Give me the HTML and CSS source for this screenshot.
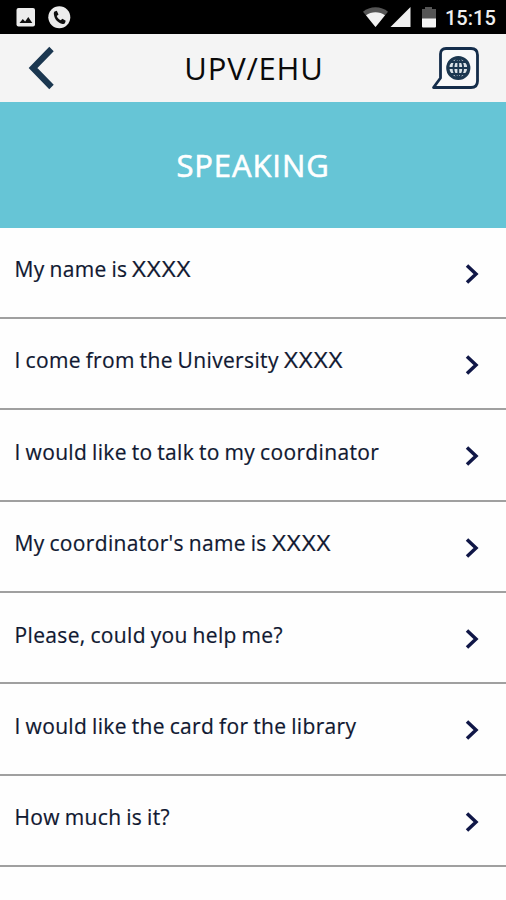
FILE: index.html
```html
<!DOCTYPE html>
<html lang="en">
<head>
<meta charset="utf-8">
<title>UPV/EHU – Speaking</title>
<link rel="stylesheet" href="styles.css">
</head>
<body>
<div class="status">
  <svg class="status-left" width="56" height="34" viewBox="0 0 56 34">
    <rect x="0.5" y="8" width="18.5" height="18.5" rx="2" fill="#ececec"/>
    <path d="M3.5 23l3.3-4 2.3 2.5 3.2-4.5 4 6z" fill="#111"/>
    <circle cx="43.3" cy="17.3" r="11" fill="#ececec"/>
    <path d="M38.6 11.4l2.2-.6 1.7 3.7-1.7 1.5c.7 2 2 3.400 3.900 4.300l1.700-1.600 3.300 2.100-.7 2.300c-.4.800-1.400 1-2.400.8-4.600-.9-8-4.700-8.700-9.500-.2-1.300-.1-2.500.7-3z" fill="#111"/>
  </svg>
  <svg class="status-right" width="76" height="34" viewBox="0 0 76 34">
    <path d="M0 11.800C6.500 5.800 18.500 5.800 25 11.800L12.500 27z" fill="#555"/>
    <path d="M3 15.200C8 11.200 17 11.200 22 15.200L12.500 27z" fill="#f2f2f2"/>
    <path d="M27.500 27L47.500 7V27z" fill="#f0f0f0"/>
    <path d="M59 9h3V7h7v2h4v10H59z" fill="#555"/>
    <path d="M59 18.500h14v8q0 1-1 1H60q-1 0-1-1z" fill="#f4f4f4"/>
  </svg>
  <span class="clock">15:15</span>
</div>
<header class="bar">
  <svg class="back" width="27" height="44" viewBox="0 0 27 44">
    <path d="M23.500 3L5 22l18.500 19" fill="none" stroke="#1b3750" stroke-width="6.200"/>
  </svg>
  <h1 class="title">UPV/EHU</h1>
  <svg class="lang" width="50" height="44" viewBox="0 0 50 44">
    <path d="M10.500 8Q10.500 2.500 16 2.500H41Q47.500 2.500 47.500 9V35Q47.500 41.500 41 41.500H3.500L10.500 32z" fill="#f8f9fa" stroke="#142d4b" stroke-width="2.800" stroke-linejoin="round"/>
    <circle cx="28.300" cy="22" r="10.500" fill="#dbe3e8" stroke="#1b3750" stroke-width="3.200"/>
    <path d="M28.300 11.500v21M17.500 22h21.500M20 16h16.600M20 28h16.600M28.300 11.500c-6.500 6-6.500 15 0 21M28.300 11.500c6.500 6 6.500 15 0 21" fill="none" stroke="#1b3750" stroke-width="1.800"/>
  </svg>
</header>
<section class="banner"><h2 class="heading">SPEAKING</h2></section>
<ul class="list">
  <li class="row"><span class="phrase">My name is <span class="blank">XXXX</span></span><svg class="chev" viewBox="0 0 14 22"><path d="M2 2.500L11 11l-9 8.500"/></svg></li>
  <li class="row"><span class="phrase">I come from the University <span class="blank">XXXX</span></span><svg class="chev" viewBox="0 0 14 22"><path d="M2 2.500L11 11l-9 8.500"/></svg></li>
  <li class="row"><span class="phrase">I would like to talk to my coordinator</span><svg class="chev" viewBox="0 0 14 22"><path d="M2 2.500L11 11l-9 8.500"/></svg></li>
  <li class="row"><span class="phrase">My coordinator's name is <span class="blank">XXXX</span></span><svg class="chev" viewBox="0 0 14 22"><path d="M2 2.500L11 11l-9 8.500"/></svg></li>
  <li class="row"><span class="phrase">Please, could you help me?</span><svg class="chev" viewBox="0 0 14 22"><path d="M2 2.500L11 11l-9 8.500"/></svg></li>
  <li class="row"><span class="phrase">I would like the card for the library</span><svg class="chev" viewBox="0 0 14 22"><path d="M2 2.500L11 11l-9 8.500"/></svg></li>
  <li class="row"><span class="phrase">How much is it?</span><svg class="chev" viewBox="0 0 14 22"><path d="M2 2.500L11 11l-9 8.500"/></svg></li>
</ul>
</body>
</html>
```
FILE: styles.css
```css
* { box-sizing: border-box; }
body { margin: 0; height: 900px; overflow: hidden; background: #fefefe; font-family: "Open Sans", "Noto Sans", sans-serif; }
.status { display: flex; height: 34px; padding: 0 11px 0 16px; background: #000; }
.status-left { margin-right: auto; }
.status-right { margin-right: 6px; }
.clock { width: 50px; color: #eee; font: 500 20px/36px Roboto, sans-serif; white-space: nowrap; }
.bar { display: grid; grid-template-columns: 50px 1fr 50px; align-items: center; height: 68px; padding: 0 26px 0 28px; background: #f4f4f4; }
.title { margin: 0; text-align: center; color: #0a0a0a; font-size: 31px; font-weight: 400; line-height: 68px; letter-spacing: 0.800px; white-space: nowrap; }
.banner { display: flex; justify-content: center; align-items: center; height: 125.500px; background: #66c5d6; }
.heading { margin: 0; color: #fff; font-size: 31px; font-weight: 400; line-height: 40px; letter-spacing: 0.900px; white-space: nowrap; -webkit-text-stroke: 0.600px #fff; }
.list { margin: 0; padding: 0; list-style: none; }
.row { display: flex; justify-content: space-between; height: 91.400px; padding: 26.500px 27px 0 14.500px; border-bottom: 2px solid #a0a0a0; }
.phrase { color: #101831; font-size: 21px; line-height: 30px; letter-spacing: 0.350px; word-spacing: -1px; white-space: nowrap; -webkit-text-stroke: 0.200px #101831; }
.blank { display: inline-block; letter-spacing: 0.800px; transform: scaleX(1.150); transform-origin: left; }
.chev { width: 14px; height: 22px; margin-top: 8.500px; }
.chev path { fill: none; stroke: #101747; stroke-width: 3.500; }
```
